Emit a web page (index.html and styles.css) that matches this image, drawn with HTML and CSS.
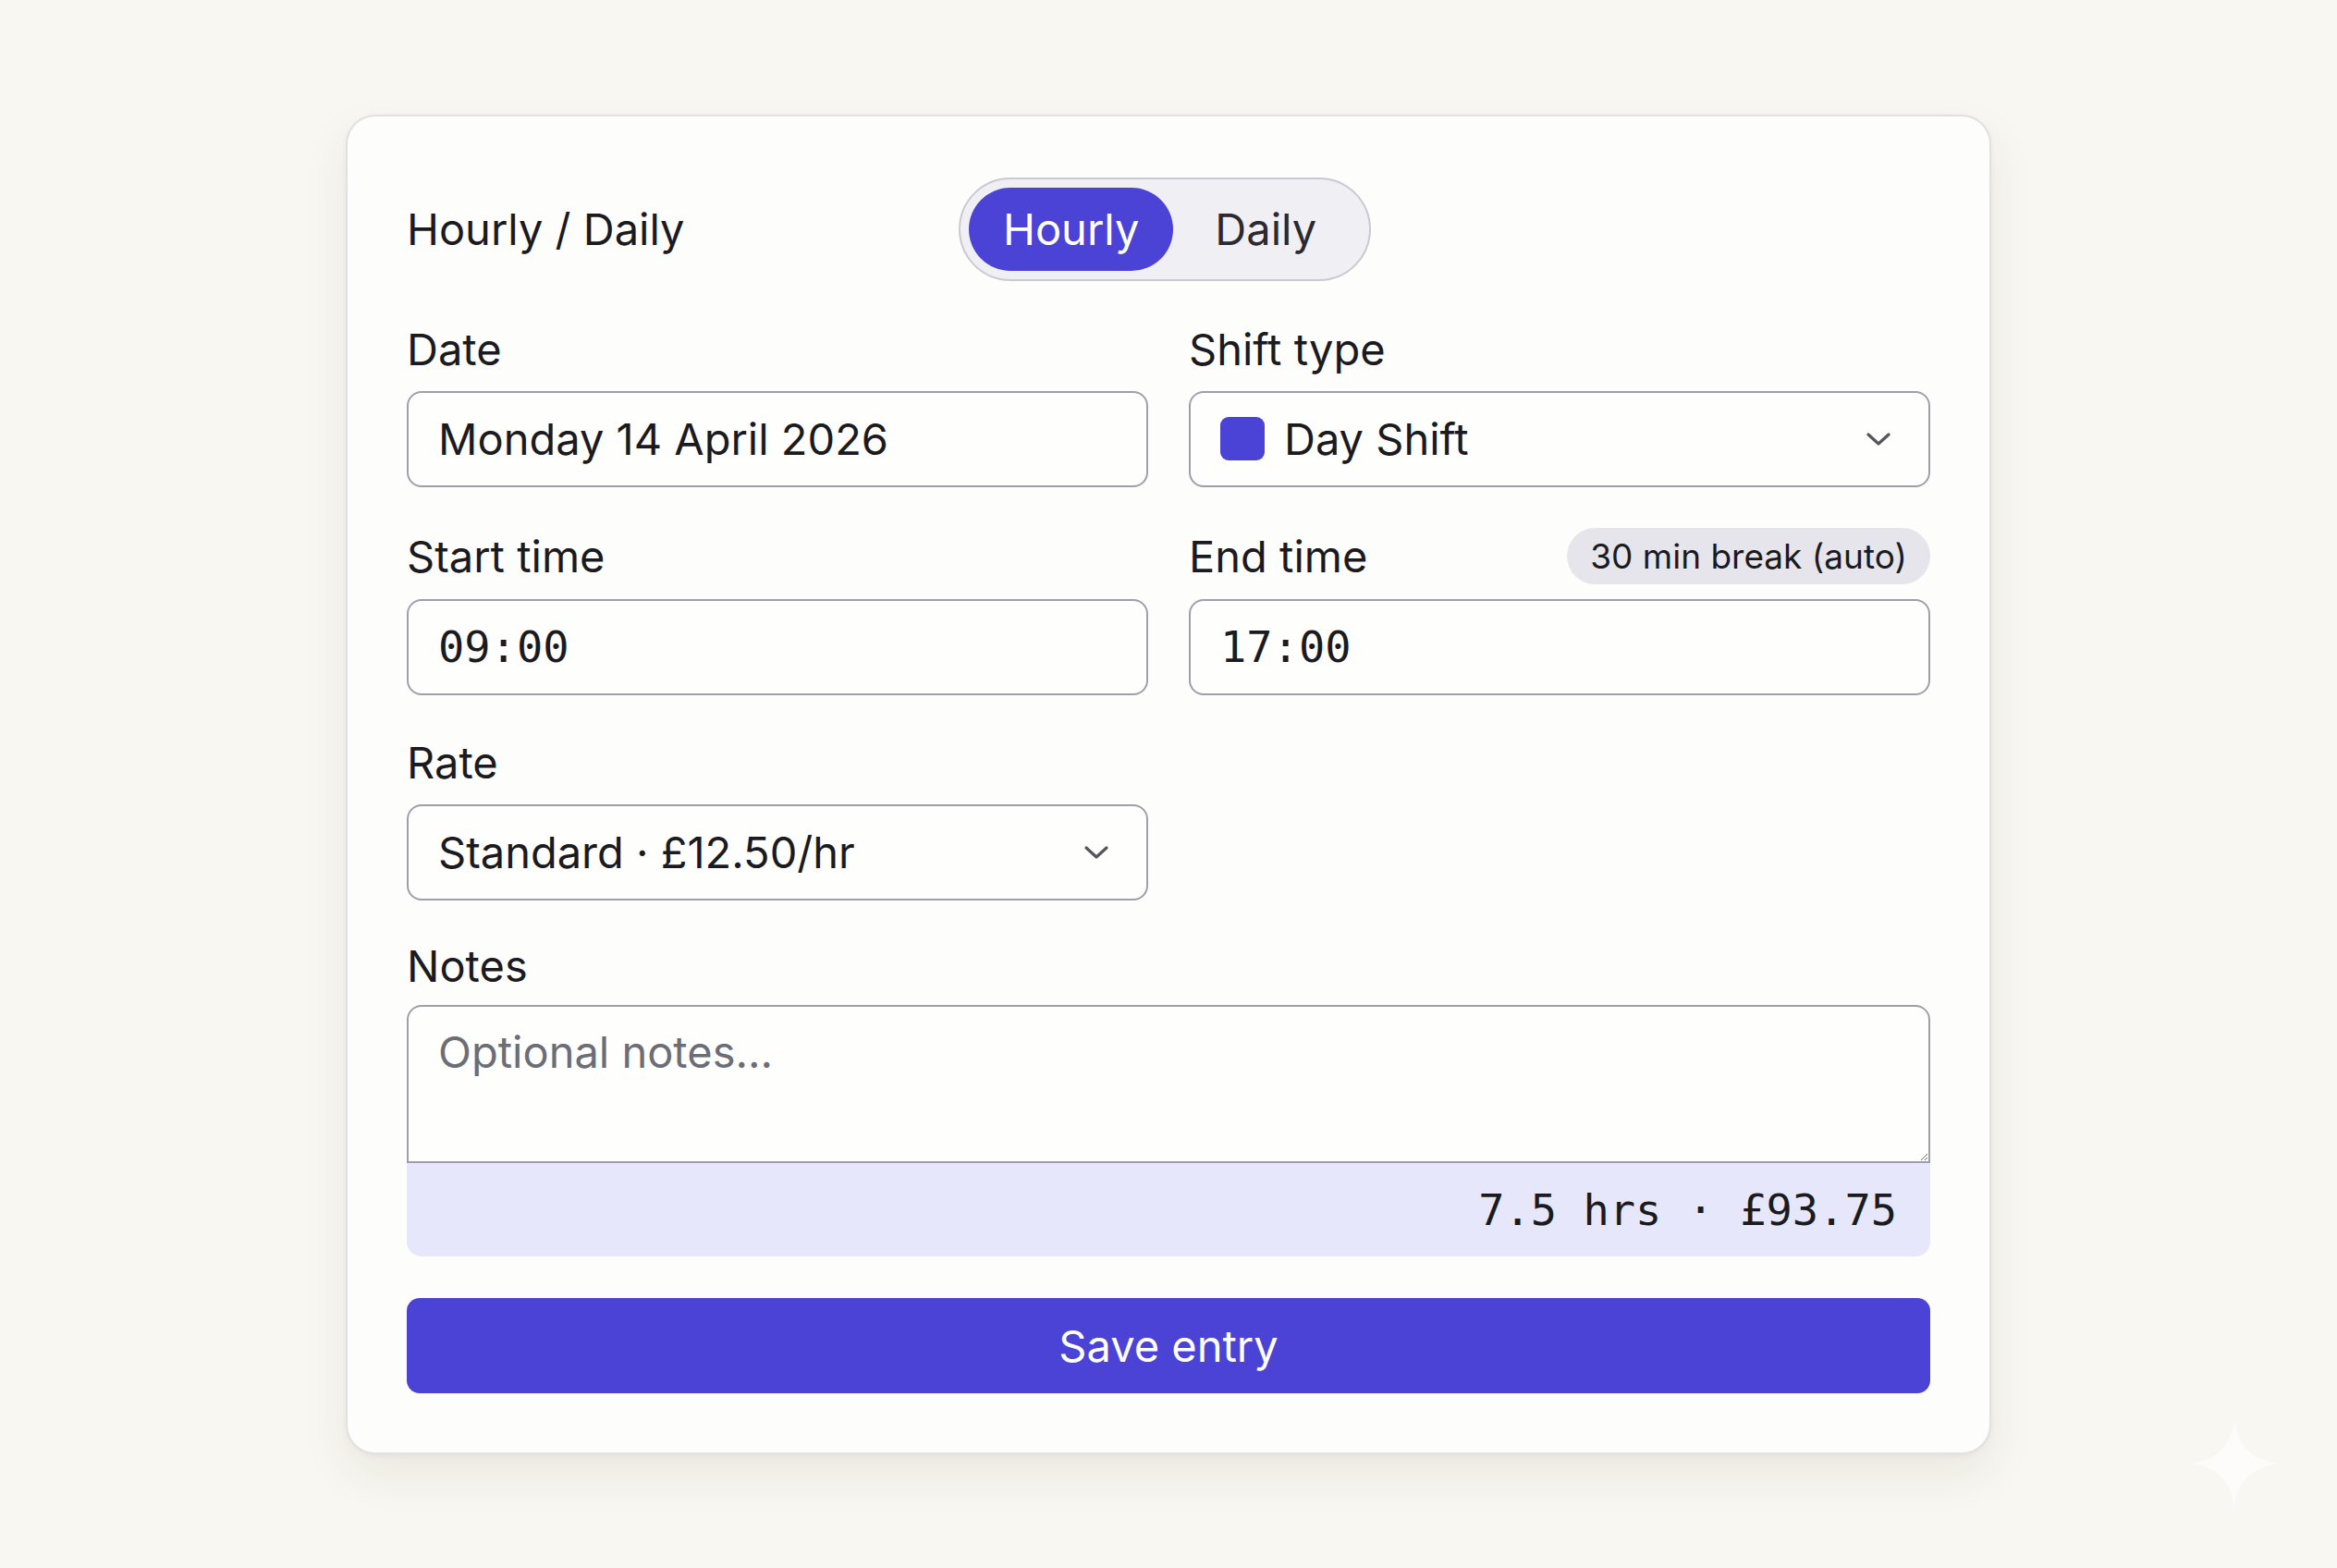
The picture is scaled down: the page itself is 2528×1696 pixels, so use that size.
FILE: index.html
```html
<!DOCTYPE html>
<html lang="en">
<head>
  <meta charset="UTF-8" />
  <title>New entry</title>
  <link rel="stylesheet" href="styles.css">
</head>
<body>

<div class="card">
  <div class="mode-row">
    <div class="mode-label">Hourly / Daily</div>
    <div class="toggle">
      <button class="toggle-btn active">Hourly</button>
      <button class="toggle-btn">Daily</button>
    </div>
  </div>

  <div class="form">
    <div class="row">
      <div class="group">
        <div class="field-head"><label>Date</label></div>
        <input class="field" type="text" value="Monday 14 April 2026">
      </div>
      <div class="group">
        <div class="field-head"><label>Shift type</label></div>
        <div class="field select">
          <span class="swatch"></span>
          <span class="select-text">Day Shift</span>
          <svg class="chevron" width="28" height="16" viewBox="0 0 28 16"><polyline points="3,3 14,13 25,3" fill="none" stroke="#55555f" stroke-width="3.2" stroke-linecap="round" stroke-linejoin="round"/></svg>
        </div>
      </div>
    </div>

    <div class="row with-badge">
      <div class="group">
        <div class="field-head"><label>Start time</label></div>
        <input class="field mono" type="text" value="09:00">
      </div>
      <div class="group">
        <div class="field-head">
          <label>End time</label>
          <span class="badge">30 min break (auto)</span>
        </div>
        <input class="field mono" type="text" value="17:00">
      </div>
    </div>

    <div class="row">
      <div class="group">
        <div class="field-head"><label>Rate</label></div>
        <div class="field select">
          <span class="select-text">Standard · £12.50/hr</span>
          <svg class="chevron" width="28" height="16" viewBox="0 0 28 16"><polyline points="3,3 14,13 25,3" fill="none" stroke="#55555f" stroke-width="3.2" stroke-linecap="round" stroke-linejoin="round"/></svg>
        </div>
      </div>
    </div>

    <div class="group notes">
      <div class="field-head"><label>Notes</label></div>
      <textarea class="notes-box" placeholder="Optional notes..."></textarea>
      <div class="summary">7.5 hrs · £93.75</div>
    </div>

    <button class="save-btn">Save entry</button>
  </div>
</div>

<svg class="sparkle" width="96" height="96" viewBox="0 0 96 96"><path d="M48 0 C52 30 66 44 96 48 C66 52 52 66 48 96 C44 66 30 52 0 48 C30 44 44 30 48 0 Z" fill="#fdfcfa"/></svg>

</body>
</html>
```

FILE: styles.css
```css
body {
  margin: 0;
  min-height: 100vh;
  display: flex;
  align-items: center;
  justify-content: center;
  background: #f9f7f2;
  font-family: Inter, "Noto Sans", sans-serif;
  color: #1b1b1f;
}
.card {
  box-sizing: border-box;
  width: 1780px;
  padding: 66px 64px 64px;
  background: #fdfdfc;
  border: 2px solid #e2e1df;
  border-radius: 32px;
  box-shadow: 0 22px 50px rgba(60, 50, 30, 0.08), 0 2px 6px rgba(0, 0, 0, 0.04);
}
.mode-row {
  display: flex;
  align-items: center;
  margin-bottom: 45px;
}
.mode-label {
  width: 597px;
  font-size: 47px;
}
.toggle {
  display: flex;
  gap: 8px;
  padding: 9px;
  background: #f0eff4;
  border: 2px solid #c9c9d1;
  border-radius: 999px;
}
.toggle-btn {
  height: 90px;
  padding: 0 37px;
  border: none;
  border-radius: 999px;
  background: transparent;
  font-family: inherit;
  font-size: 47px;
  color: #2a2a30;
}
.toggle-btn:last-child {
  padding-right: 48px;
}
.toggle-btn.active {
  background: #4b43d6;
  color: #ffffff;
}
.form {
  display: flex;
  flex-direction: column;
  gap: 44px;
}
.row {
  display: grid;
  grid-template-columns: 1fr 1fr;
  column-gap: 44px;
}
.group {
  display: flex;
  flex-direction: column;
}
.field-head {
  display: flex;
  align-items: center;
  justify-content: space-between;
  min-height: 58px;
  margin-bottom: 16px;
  font-size: 47px;
}
.with-badge .field-head {
  min-height: 61px;
}
.badge {
  height: 61px;
  line-height: 61px;
  padding: 0 25px;
  background: #e5e5eb;
  border-radius: 999px;
  font-size: 37px;
}
.field {
  box-sizing: border-box;
  height: 104px;
  width: 100%;
  padding: 0 32px;
  border: 2px solid #9f9fab;
  border-radius: 16px;
  background: #fefefd;
  font-family: inherit;
  font-size: 47px;
  color: #1b1b1f;
  outline: none;
}
.field.mono {
  font-family: "DejaVu Sans Mono", monospace;
  font-size: 47px;
}
.select {
  display: flex;
  align-items: center;
}
.select-text {
  flex: 1;
}
.swatch {
  width: 48px;
  height: 47px;
  margin-right: 21px;
  border-radius: 9px;
  background: #4b43d6;
}
.chevron {
  margin-right: 8px;
}
.notes {
  margin-top: -2px;
}
.notes .field-head {
  margin-bottom: 13px;
}
.notes-box {
  box-sizing: border-box;
  height: 171px;
  padding: 20px 32px;
  border: 2px solid #9f9fab;
  border-radius: 16px 16px 0 0;
  background: #fefefd;
  font-family: inherit;
  font-size: 47px;
  line-height: 58px;
  color: #1b1b1f;
  resize: vertical;
  outline: none;
}
.notes-box::placeholder {
  color: #6d6d77;
}
.summary {
  height: 101px;
  display: flex;
  align-items: center;
  justify-content: flex-end;
  padding: 0 36px;
  background: #e6e7fa;
  border-radius: 0 0 16px 16px;
  font-family: "DejaVu Sans Mono", monospace;
  font-size: 47px;
  color: #1b1b1f;
}
.save-btn {
  height: 103px;
  margin-top: 1px;
  border: none;
  border-radius: 14px;
  background: #4b43d6;
  color: #ffffff;
  font-family: inherit;
  font-size: 47px;
}
.sparkle {
  position: absolute;
  left: 2369px;
  top: 1535px;
}
```
